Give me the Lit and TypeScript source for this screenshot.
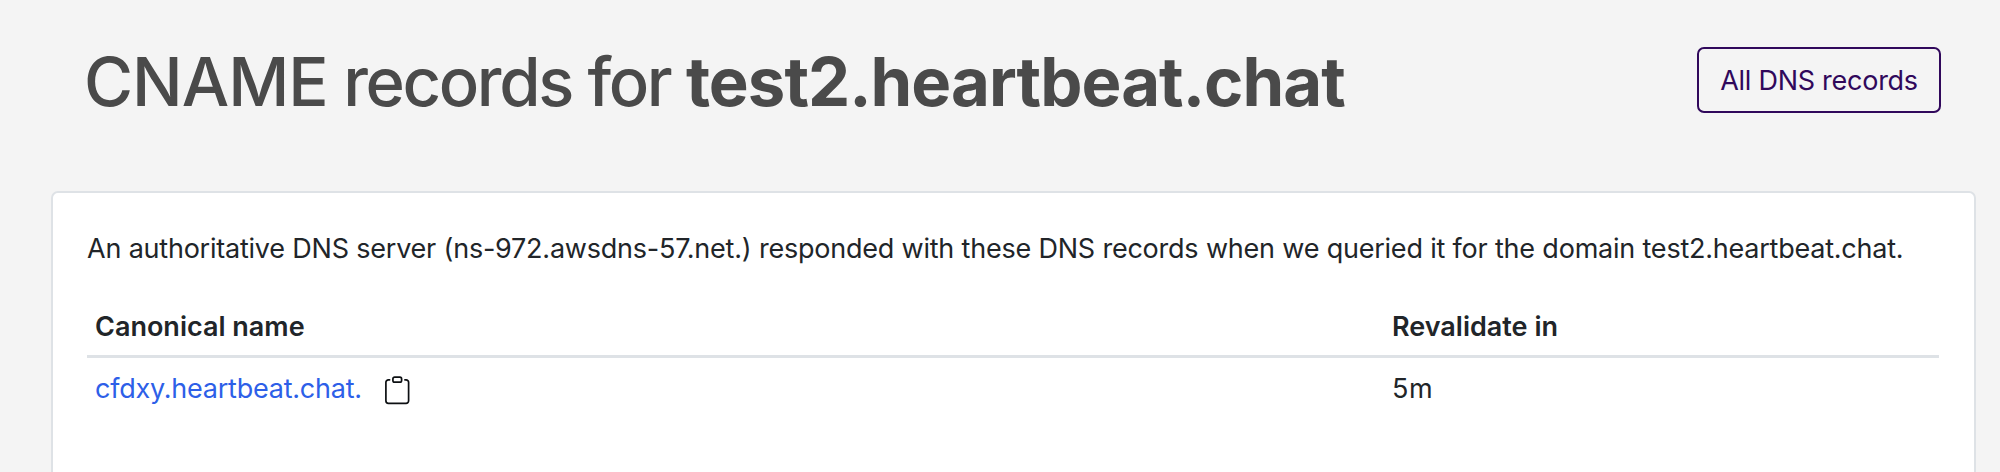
import { LitElement, html, css } from "lit";
import { customElement, property } from "lit/decorators.js";

interface DnsRecord {
  name: string;
  ttl: string;
}

@customElement("clipboard-icon")
export class ClipboardIcon extends LitElement {
  static styles = css`
    :host { display: block; width: 25px; height: 29px; }
    svg { display: block; }
  `;
  render() {
    return html`<svg width="25" height="29" viewBox="0 0 25 29" fill="none" stroke="#0c0f12" stroke-width="1.7" stroke-linecap="round">
      <path d="M4.6 3.8H3.4A2.5 2.5 0 0 0 .9 6.3V24.8A2.5 2.5 0 0 0 3.4 27.3H21.1A2.5 2.5 0 0 0 23.6 24.8V6.3A2.5 2.5 0 0 0 21.1 3.8H19.9" />
      <rect x="7.9" y="1.2" width="8.7" height="5" rx="1.7" />
    </svg>`;
  }
}

@customElement("app-root")
export class AppRoot extends LitElement {
  @property() domain = "test2.heartbeat.chat";
  @property() server = "ns-972.awsdns-57.net.";
  @property({ attribute: false }) records: DnsRecord[] = [
    { name: "cfdxy.heartbeat.chat.", ttl: "5m" },
  ];

  static styles = css`
    :host {
      display: flex;
      flex-direction: column;
      box-sizing: border-box;
      height: 472px;
      overflow: hidden;
      padding: 41px 24px 0 51px;
      background: #f4f4f4;
      color: #212529;
      font: 400 27px/40px Inter, sans-serif;
    }
    .header {
      display: flex;
      justify-content: space-between;
      align-items: flex-start;
      height: 150px;
      flex: none;
      padding: 0 35px 0 33px;
    }
    h1 {
      display: flex;
      margin: 0;
      font-size: 67px;
      font-weight: 500;
      line-height: 82px;
      color: #4a4a4a;
      white-space: pre;
    }
    .type { letter-spacing: -1.05px; }
    .title { letter-spacing: -2.35px; }
    .domain { font-weight: 700; letter-spacing: -0.96px; }
    .button {
      box-sizing: border-box;
      height: 66px;
      width: 244px;
      margin-top: 6px;
      border: 2px solid #30085b;
      border-radius: 7px;
      background: none;
      padding: 2px 0 0;
      font: inherit;
      letter-spacing: -0.26px;
      color: #30085b;
    }
    .card {
      flex: none;
      box-sizing: border-box;
      height: 320px;
      border: 2px solid #dee2e6;
      border-radius: 7px;
      background: #fff;
      padding: 36px 35px 0 34px;
    }
    p { margin: 0 0 38px; letter-spacing: -0.23px; word-spacing: 0.15px; white-space: nowrap; }
    .row {
      display: grid;
      grid-template-columns: 1297px 1fr;
      padding-left: 8px;
    }
    .head { font-weight: 600; padding-bottom: 8px; border-bottom: 3px solid #dee2e6; }
    .body { padding-top: 11px; }
    .name { display: flex; gap: 23.5px; }
    .link { color: #2d5fe8; letter-spacing: -0.23px; text-decoration: none; }
    .ttl { letter-spacing: 0.5px; }
    clipboard-icon { margin-top: 7px; }
  `;

  render() {
    return html`
      <div class="header">
        <h1><span class="type">CNAME</span><span class="title"> records for </span><span class="domain">${this.domain}</span></h1>
        <button class="button">All DNS records</button>
      </div>
      <div class="card">
        <p>An authoritative DNS server (${this.server}) responded with these DNS records when we queried it for the domain ${this.domain}.</p>
        <div class="row head"><span>Canonical name</span><span>Revalidate in</span></div>
        ${this.records.map(
          (r) => html`<div class="row body">
            <div class="name"><a class="link">${r.name}</a><clipboard-icon></clipboard-icon></div>
            <span class="ttl">${r.ttl}</span>
          </div>`
        )}
      </div>
    `;
  }
}
